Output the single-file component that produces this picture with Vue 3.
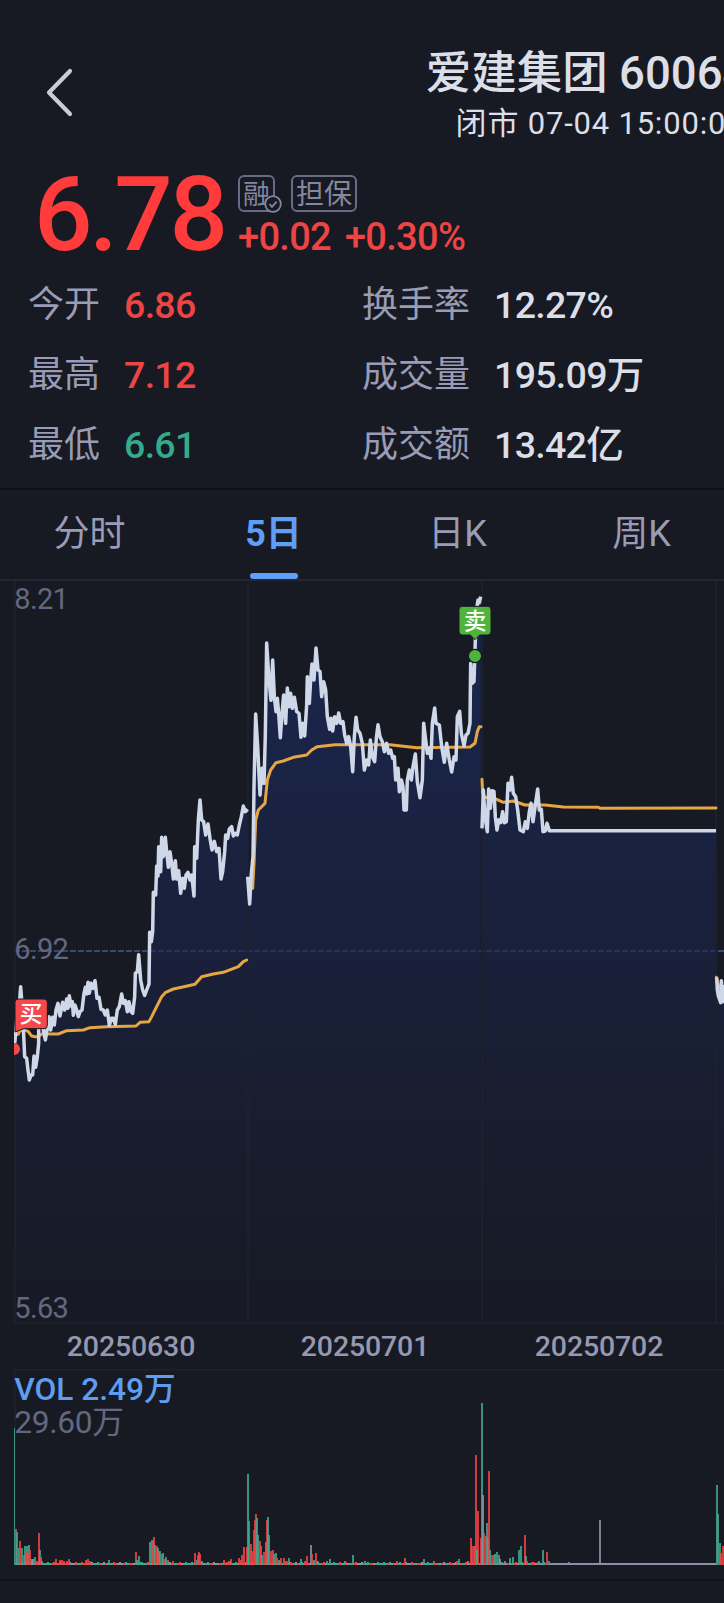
<template>
  <div class="page">
    <header class="header">
      <button class="back" aria-label="返回">
        <svg width="28" height="50" viewBox="0 0 28 50">
          <path d="M25 3 L4 24.5 L25 46" />
        </svg>
      </button>
      <div class="heading">
        <h1>爱建集团 600643</h1>
        <p>闭市 07-04 15:00:00</p>
      </div>
    </header>

    <section class="quote">
      <div class="price">6.78</div>
      <div class="quote-side">
        <div class="tags">
          <span class="tag tag-margin">
            融
            <svg class="check" width="18" height="18" viewBox="0 0 18 18">
              <circle cx="9" cy="9" r="7.8" />
              <path d="M5.4 9 L8 11.8 L12.6 6.6" />
            </svg>
          </span>
          <span class="tag">担保</span>
        </div>
        <div class="change">
          <span>+0.02</span>
          <span>+0.30%</span>
        </div>
      </div>
    </section>

    <section class="stats">
      <div v-for="item in stats" :key="item.label" class="stat">
        <span class="stat-label">{{ item.label }}</span>
        <span class="stat-value" :class="item.tone">{{ item.value }}</span>
      </div>
    </section>

    <nav class="tabs">
      <button
        v-for="tab in tabs"
        :key="tab"
        class="tab"
        :class="{ active: tab === activeTab }"
        @click="activeTab = tab"
      >
        {{ tab }}
      </button>
    </nav>

    <!-- Price chart -->
    <svg class="chart" width="724" height="743" viewBox="0 0 2172 2229">
      <defs>
        <linearGradient id="area" gradientUnits="userSpaceOnUse" x1="0" y1="0" x2="0" y2="2226">
          <stop offset="0" stop-color="#1a2856" stop-opacity="0.9" />
          <stop offset="0.4" stop-color="#1a2345" stop-opacity="0.8" />
          <stop offset="0.7" stop-color="#191e33" stop-opacity="0.8" />
          <stop offset="1" stop-color="#171a25" stop-opacity="0.8" />
        </linearGradient>
        <clipPath id="plot">
          <rect x="42" y="0" width="2130" height="2229" />
        </clipPath>
      </defs>

      <path v-for="s in sessions" :key="s.id" :d="areaPath(s)" fill="url(#area)" />
      <line class="mid" x1="42" y1="1110" x2="442" y2="1110" />
      <line class="mid dim" x1="450" y1="1110" x2="2146" y2="1110" />
      <line class="mid" x1="2154" y1="1110" x2="2172" y2="1110" />
      <line
        v-for="x in gridX"
        :key="x"
        class="grid"
        :x1="x"
        y1="0"
        :x2="x"
        y2="2226"
      />
      <line class="grid" x1="42" y1="2226" x2="2172" y2="2226" />

      <g clip-path="url(#plot)">
        <g v-for="s in sessions" :key="s.id" :transform="`translate(${s.x} ${s.y})`">
          <polyline class="avg" :points="s.avg" />
          <polyline class="line" :points="s.price" />
        </g>
        <circle class="buy" cx="42" cy="1404" r="18" />
        <circle class="sell ring" cx="1425" cy="225" r="20" />
      </g>

      <g class="flag">
        <path class="buy" d="M54 1254 H132 Q142 1254 142 1264 V1333 Q142 1343 132 1343 H72 L45 1353 V1264 Q45 1254 54 1254 Z" />
        <text x="93" y="1323">买</text>
      </g>
      <g class="flag">
        <path class="sell" d="M1387 76 H1463 Q1473 76 1473 86 V152 Q1473 162 1463 162 H1439 L1425 176 L1411 162 H1387 Q1377 162 1377 152 V86 Q1377 76 1387 76 Z" />
        <text x="1425" y="144">卖</text>
      </g>

      <text class="axis" x="43" y="84">8.21</text>
      <text class="axis" x="43" y="1134">6.92</text>
      <text class="axis" x="43" y="2211">5.63</text>
    </svg>

    <div class="dates">
      <span v-for="d in dates" :key="d">{{ d }}</span>
    </div>

    <!-- Volume chart -->
    <section class="volume">
      <svg class="chart" width="724" height="200" viewBox="0 0 2172 600">
        <line class="grid" x1="42" y1="2" x2="2172" y2="2" />
        <line class="grid" x1="45" y1="0" x2="45" y2="587" />
        <text class="vol-now" x="43" y="92">VOL 2.49万</text>
        <text class="vol-max" x="43" y="191">29.60万</text>
        <g shape-rendering="crispEdges">
          <rect
            v-for="(b, i) in baseBars"
            :key="'s' + i"
            :class="b.tone"
            :x="b.x"
            :y="587 - b.h"
            width="6"
            :height="b.h"
          />
          <rect class="n" x="1650" y="581" width="498" height="6" />
          <rect
            v-for="(b, i) in bars"
            :key="i"
            class="bar"
            :class="b.tone"
            :x="b.x < 45 ? 42 : b.x - 3"
            :y="587 - b.h"
            :width="b.x < 45 ? 3 : 6"
            :height="b.h"
          />
        </g>
      </svg>
    </section>
  </div>
</template>

<script setup>
import { ref } from 'vue'

const stats = [
  { label: '今开', value: '6.86', tone: 'up' },
  { label: '换手率', value: '12.27%' },
  { label: '最高', value: '7.12', tone: 'up' },
  { label: '成交量', value: '195.09万' },
  { label: '最低', value: '6.61', tone: 'down' },
  { label: '成交额', value: '13.42亿' }
]

const tabs = ['分时', '5日', '日K', '周K']
const activeTab = ref('5日')

const dates = ['20250630', '20250701', '20250702']
const gridX = [45, 744, 1446, 2148]

// One entry per trading day, points are relative to x / y
const sessions = [
  {
    id: 1,
    x: 0,
    y: 597,
    price:
      '44,790 50,720 56,700 62,620 68,700 74,830 80,835 84,870 88,900 93,885 98,885 102,828 107,862 112,830 116,790 116,745 122,700 128,740 136,780 142,745 147,710 152,750 158,712 163,735 168,690 174,670 180,708 188,667 194,690 200,657 204,685 208,647 213,678 217,665 220,706 225,675 230,690 235,710 240,695 246,690 252,640 256,622 260,642 264,607 268,640 273,610 279,625 285,602 291,655 297,652 303,688 310,690 316,705 322,690 328,736 334,715 340,715 346,733 352,690 358,680 365,642 370,670 376,662 382,695 387,665 393,695 398,700 404,650 406,580 412,575 416,524 422,600 428,630 434,646 440,630 447,612 449,457 454,485 458,455 460,337 467,345 470,258 474,288 476,200 482,275 485,172 490,230 496,172 500,215 505,262 510,215 515,250 520,297 526,242 530,297 536,272 542,340 548,295 553,325 558,285 564,277 570,300 575,285 582,348 584,200 590,235 595,120 600,60 605,120 611,125 617,165 624,132 630,175 636,210 643,184 650,215 657,205 663,297 668,275 674,215 677,165 683,175 688,147 695,140 700,168 706,160 712,165 718,135 724,110 730,78 736,95 743,88',
    avg: '45,780 48,765 55,762 60,752 75,750 85,755 95,768 105,770 115,770 125,762 175,762 200,752 250,750 270,743 320,740 408,738 420,727 447,725 455,710 470,680 485,650 497,637 520,627 545,622 585,613 605,590 640,582 670,577 715,560 730,545 740,540'
  },
  {
    id: 2,
    x: 720,
    y: -3,
    price:
      '23,890 29,972 34,880 39,830 42,620 47,402 53,500 60,645 66,565 72,610 76,465 80,189 87,300 93,361 98,240 103,350 108,395 112,355 116,400 121,473 126,400 131,345 137,430 142,324 147,380 152,340 157,385 163,352 170,395 177,400 183,472 188,430 194,468 200,375 202,290 208,370 212,300 216,252 222,300 228,204 234,270 240,275 245,350 251,305 257,330 262,410 269,448 273,415 278,453 284,410 290,430 296,399 302,430 309,425 314,465 320,490 326,470 332,500 338,575 343,470 348,412 353,450 360,460 367,490 373,570 380,540 386,555 391,480 397,530 404,545 409,475 414,434 420,470 427,485 433,515 440,490 446,520 452,510 458,535 463,530 467,600 474,565 478,635 484,600 489,620 492,690 499,690 502,600 508,570 514,600 519,560 526,522 532,605 540,653 547,600 551,430 557,480 562,520 568,505 573,535 577,430 584,384 588,430 598,435 605,500 613,547 620,490 628,540 635,576 642,530 648,540 652,410 659,394 664,460 672,498 678,465 684,460 690,430 692,250 696,310 702,305 706,180 708,100 714,60 718,68 722,50',
    avg: '38,925 42,850 47,720 55,690 75,670 82,600 92,570 108,548 130,543 160,532 200,525 215,510 232,500 285,494 450,494 530,503 690,501 705,490 712,455 718,440 723,440'
  },
  {
    id: 3,
    x: 1410,
    y: 477,
    price:
      '36,265 40,150 45,230 52,275 56,147 61,205 66,152 72,155 76,230 81,270 86,240 92,248 98,215 103,248 109,245 114,130 120,150 125,112 130,160 137,170 143,210 150,270 160,275 166,245 172,265 178,215 183,190 189,245 196,195 203,147 208,210 214,208 219,275 226,273 231,250 238,272 738,272',
    avg: '36,118 38,160 45,172 80,178 100,187 130,183 165,195 225,195 280,201 385,202 390,205 738,204'
  },
  {
    id: 4,
    x: 1410,
    y: 477,
    price: '740,712 742,750 745,768 752,788 754,722 758,785 762,740 768,780',
    avg: '739,712 743,730 750,745 768,748'
  }
]

function areaPath(s) {
  const pts = s.price.split(' ').map((p) => p.split(',').map(Number))
  const line = pts.map(([x, y]) => `L${x + s.x} ${y + s.y}`).join(' ')
  const first = pts[0][0] + s.x
  const last = pts[pts.length - 1][0] + s.x
  return `M${first} 2226 ${line} L${last} 2226 Z`
}

// x,height,tone (r = up, g = down, n = flat)
const volumes =
  '43,410,g 47,107,r 51,97,g 57,50,g 60,70,r 66,50,g 71,28,r 75,55,g 81,57,g 86,60,g 90,43,r 80,40,r 84,36,r 95,18,n 100,16,n 104,22,g 110,12,r 117,94,r 120,44,g 123,22,r 127,12,g ' +
  '163,8,r 167,17,r 181,14,r 187,13,r 192,12,r 200,10,r 207,16,r 258,14,r 264,16,r 270,12,r 276,8,n 327,14,g 407,38,r 412,14,g 417,25,g 421,8,g ' +
  '450,68,g 455,74,g 461,84,r 459,70,r 466,60,g 471,56,r 475,50,g 478,42,r 480,42,g 485,32,r 489,34,g 494,18,r 498,22,g 504,14,r 508,8,g 520,10,r 585,34,r 590,14,g 593,28,r 597,38,r 601,32,r 605,10,g 672,14,r 680,8,r 687,12,r 693,16,r ' +
  '716,20,r 722,14,r 726,28,r 731,52,r 741,52,r 744,272,g 748,130,g 752,62,r 757,40,r 762,105,r 765,135,r 768,152,r 772,140,g 775,90,g 779,70,r 783,55,r 787,28,g 792,38,r 797,68,g 801,135,r 804,142,g 808,90,g 814,42,r 819,44,r 822,32,g 827,35,g 832,20,r 838,14,g 844,20,r 851,20,r 856,10,r 862,12,r 867,20,g 872,8,r ' +
  '904,16,g 914,10,r 921,25,r 933,58,n 937,32,r 942,14,g 948,34,r 953,10,g 981,12,g 990,16,g 1034,10,g 1059,30,g 1094,10,g 1192,10,r 1214,20,r 1272,16,g 1302,10,r 1372,12,r 1377,18,g ' +
  '1404,10,n 1413,80,r 1417,56,r 1421,56,r 1424,56,r 1428,328,r 1433,160,r 1430,45,g 1442,80,r 1446,485,g 1450,208,n 1452,95,r 1457,85,r 1461,125,g 1464,80,g 1467,281,r 1471,45,g 1476,28,r 1481,30,r 1486,32,g 1491,38,g 1496,30,g 1501,16,n 1506,8,g 1514,12,n 1530,20,g 1538,22,g ' +
  '1558,45,g 1563,56,g 1575,88,r 1578,25,g 1582,12,r 1601,8,r 1616,10,g 1629,44,g 1640,38,r 1647,12,g 1707,8,n 1800,134,n 2151,238,g 2155,152,g 2160,64,g 2164,35,r 2170,56,r'

const bars = volumes.split(' ').map((v) => {
  const [x, h, tone] = v.split(',')
  return { x: Number(x), h: Number(h), tone }
})

// Quiet minutes between the spikes
const baseTones = 'ggrnrrgnngrrgrgnrg'
const baseBars = []
for (let i = 0; i < 268; i++) {
  baseBars.push({
    x: 45 + i * 6,
    h: (i * 7) % 11 < 3 ? 9 : 6,
    tone: baseTones[(i * 5 + (i >> 2)) % baseTones.length]
  })
}
</script>

<style>
body {
  background: #171a23;
}
</style>

<style scoped>
.page {
  width: 724px;
  height: 1603px;
  overflow: hidden;
  background: #171a23;
  color: #dcdfe8;
  font-family: Roboto, "Noto Sans CJK SC", sans-serif;
}

button {
  background: none;
  border: none;
  padding: 0;
  font-family: inherit;
}

.header {
  display: flex;
  height: 164px;
  box-sizing: border-box;
  padding: 44px 0 0 45px;
}

.back {
  width: 28px;
  height: 50px;
  margin-top: 24px;
}

.back path {
  fill: none;
  stroke: #c9ccd4;
  stroke-width: 4.2;
  stroke-linecap: round;
  stroke-linejoin: round;
}

.heading {
  flex: none;
  width: 360px;
  margin-left: 347px;
  text-align: center;
  white-space: nowrap;
}

.heading h1 {
  margin: 0;
  font-size: 45.5px;
  font-weight: 500;
  line-height: 60px;
}

.heading p {
  margin: 0;
  font-size: 31px;
  line-height: 40px;
  letter-spacing: 0.8px;
}

.quote {
  display: flex;
  height: 106px;
  padding-left: 34px;
}

.price {
  width: 204px;
  font-size: 103px;
  font-weight: 500;
  line-height: 102px;
  letter-spacing: -3.4px;
  color: #ff3b3b;
}

.tags {
  display: flex;
  gap: 16px;
  padding-top: 11px;
}

.tag {
  position: relative;
  box-sizing: border-box;
  height: 37px;
  padding: 0 3px;
  border: 2px solid #696b82;
  border-radius: 6px;
  font-size: 28px;
  line-height: 36px;
  color: #85879f;
}

.tag-margin {
  width: 37px;
  font-size: 27px;
}

.check {
  position: absolute;
  right: -9px;
  bottom: -3px;
}

.check circle,
.check path {
  fill: #171a23;
  stroke: #85879f;
  stroke-width: 1.8;
}

.check path {
  fill: none;
}

.change {
  display: flex;
  gap: 14px;
  font-size: 38px;
  font-weight: 500;
  line-height: 50px;
  letter-spacing: -0.7px;
  color: #ee4444;
}

.stats {
  display: grid;
  grid-template-columns: 334px 1fr;
  grid-auto-rows: 70px;
  height: 218px;
  padding-left: 28px;
  border-bottom: 2px solid #0f1118;
}

.stat {
  display: flex;
  align-items: center;
  gap: 24px;
  height: 70px;
  line-height: 44px;
  white-space: nowrap;
}

.stat-label {
  font-size: 36px;
  color: #9a9cb5;
}

.stat-value {
  font-size: 37.5px;
  font-weight: 500;
  letter-spacing: -0.7px;
}

.up {
  color: #ee4444;
}

.down {
  color: #33ab8c;
}

.tabs {
  display: grid;
  grid-template-columns: repeat(4, 184px);
  height: 89px;
  border-bottom: 2px solid #222532;
}

.tab {
  position: relative;
  padding: 0 5px 9px 0;
  font-size: 36px;
  color: #9a9cb5;
}

.tab.active {
  font-weight: 700;
  color: #5e9ef7;
}

.tab.active::after {
  content: "";
  position: absolute;
  left: 66px;
  bottom: 0;
  width: 48px;
  height: 6px;
  border-radius: 3px;
  background: #5e9ef7;
}

.chart {
  display: block;
}

.grid {
  stroke: #1f222e;
  stroke-width: 5;
}

.mid {
  stroke: #42588a;
  stroke-width: 5;
  stroke-dasharray: 18 6;
}

.dim {
  stroke: #2b3a63;
}

.line,
.avg {
  fill: none;
  stroke-linejoin: round;
}

.line {
  stroke: #ced8e8;
  stroke-width: 10.5;
}

.avg {
  stroke: #e6a743;
  stroke-width: 9;
  stroke-linecap: round;
}

.buy {
  fill: #f4484c;
}

.sell {
  fill: #4fb43c;
}

.ring {
  stroke: #171a23;
  stroke-width: 4;
}

.flag path {
  stroke: #171a23;
  stroke-width: 3;
}

.flag text {
  fill: #fff;
  font-size: 68px;
  font-weight: 500;
  text-anchor: middle;
}

.axis {
  fill: #65677f;
  font-size: 87px;
  letter-spacing: -2px;
}

.dates {
  display: grid;
  grid-template-columns: repeat(3, 234px);
  height: 45px;
  padding-left: 14px;
  font-size: 28.5px;
  font-weight: 500;
  line-height: 45px;
  letter-spacing: -0.15px;
  text-align: center;
  color: #9698b0;
}

.volume {
  height: 210px;
  border-bottom: 2px solid #0f1118;
}

.vol-now,
.vol-max {
  font-size: 95px;
}

.vol-now {
  fill: #5e9ef0;
  font-weight: 500;
}

.vol-max {
  fill: #65677f;
  letter-spacing: -1px;
}

.bar {
  opacity: 0.85;
}

.r {
  fill: #f04444;
}

.g {
  fill: #3fa78e;
}

.n {
  fill: #8d8fa5;
}
</style>
